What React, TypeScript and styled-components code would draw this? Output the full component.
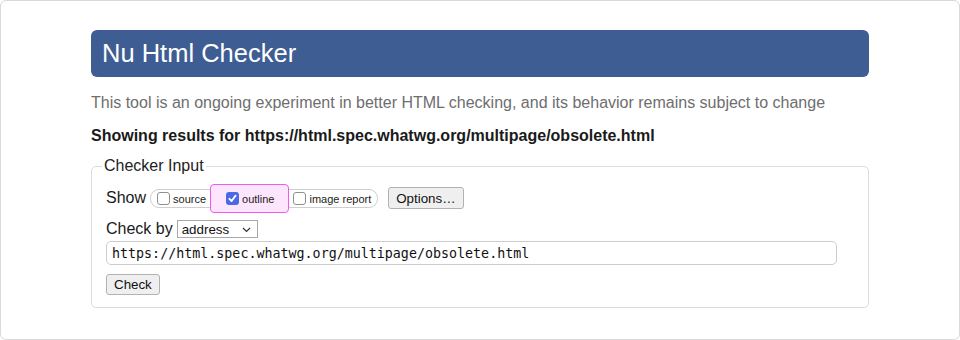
import React from 'react';
import styled, { createGlobalStyle } from 'styled-components';

const GlobalStyle = createGlobalStyle`
  html, body {
    margin: 0;
    padding: 0;
    background: #ffffff;
  }
  body {
    font-family: "Liberation Sans", Arial, sans-serif;
    color: #222;
  }
`;

const Frame = styled.div`
  box-sizing: border-box;
  width: 960px;
  height: 340px;
  border: 1px solid #d9d9d9;
  border-radius: 6px;
  padding: 29px 90px 0 90px;
`;

const Header = styled.h1`
  margin: 0;
  height: 47px;
  display: flex;
  align-items: center;
  padding-left: 11px;
  background: #3e5d92;
  border-radius: 6px;
  color: #ffffff;
  font-size: 25.5px;
  font-weight: 400;
`;

const Intro = styled.p`
  margin: 16px 0 0;
  font-size: 16px;
  line-height: 20px;
  color: #6e6e6e;
`;

const ResultsFor = styled.p`
  margin: 13px 0 0;
  font-size: 16px;
  line-height: 20px;
  font-weight: 700;
  color: #1a1a1a;
`;

const Fieldset = styled.fieldset`
  margin: 10px 0 0;
  padding: 7px 13px 12px 14px;
  border: 1px solid #dcdcdc;
  border-radius: 5px;
  display: flex;
  flex-direction: column;
`;

const Legend = styled.legend`
  margin-left: -4px;
  padding: 0 2px;
  font-size: 16px;
  line-height: 20px;
  color: #222;
`;

const Row = styled.div<{ $height: number; $gap?: number }>`
  display: flex;
  align-items: center;
  height: ${(p) => p.$height}px;
  margin-top: ${(p) => p.$gap ?? 0}px;
`;

const FieldLabel = styled.span`
  font-size: 16px;
  color: #1a1a1a;
  margin-right: 4px;
`;

const Toggles = styled.span`
  display: inline-flex;
  align-items: center;
  box-sizing: border-box;
  height: 19px;
  padding: 0 6px 0 6px;
  border: 1px solid #cfcfcf;
  border-radius: 9px;
  margin-right: 10px;
`;

const Toggle = styled.label<{ $active?: boolean }>`
  display: inline-flex;
  align-items: center;
  box-sizing: border-box;
  font-size: 11px;
  color: #222;
  height: ${(p) => (p.$active ? '29px' : 'auto')};
  margin: ${(p) => (p.$active ? '0 4px' : '0')};
  padding: ${(p) => (p.$active ? '0 14px 0 15px' : '0')};
  border: ${(p) => (p.$active ? '1px solid #ee5cee' : 'none')};
  border-radius: 4px;
  background: ${(p) => (p.$active ? '#fde5fd' : 'transparent')};
`;

const ToggleText = styled.span`
  padding-top: 2px;
`;

const Box = styled.span<{ $checked?: boolean }>`
  box-sizing: border-box;
  width: 13px;
  height: 13px;
  margin-right: 3px;
  border-radius: 3px;
  border: ${(p) => (p.$checked ? 'none' : '1px solid #8f8f8f')};
  background: ${(p) => (p.$checked ? '#4a69e6' : '#ffffff')};
  display: inline-flex;
  align-items: center;
  justify-content: center;
`;

const Button = styled.button<{ $height: number; $pad: number }>`
  box-sizing: border-box;
  height: ${(p) => p.$height}px;
  padding: 0 ${(p) => p.$pad}px;
  font-family: "Liberation Sans", Arial, sans-serif;
  font-size: 13.33px;
  color: #111;
  background: #efefef;
  border: 1px solid #b2b2b2;
  border-radius: 3px;
`;

const SelectWrap = styled.span`
  position: relative;
  display: inline-flex;
  align-items: center;
  box-sizing: border-box;
  width: 81px;
  height: 18px;
  border: 1px solid #a9a9a9;
  background: #ffffff;
`;

const Select = styled.select`
  appearance: none;
  -webkit-appearance: none;
  border: none;
  background: transparent;
  outline: none;
  width: 100%;
  height: 100%;
  padding: 0 0 0 4px;
  margin: 0;
  font-family: "Liberation Sans", Arial, sans-serif;
  font-size: 13.33px;
  color: #111;
`;

const Chevron = styled.svg`
  position: absolute;
  right: 6px;
  top: 6px;
  pointer-events: none;
`;

const UrlInput = styled.input`
  box-sizing: border-box;
  width: 731px;
  height: 24px;
  padding: 0 5px;
  border: 1px solid #cccccc;
  border-radius: 5px;
  font-family: "DejaVu Sans Mono", monospace;
  font-size: 13.33px;
  color: #111;
`;

const Check = () => (
  <svg width="9" height="9" viewBox="0 0 9 9">
    <path d="M1.4 4.8 L3.6 7 L7.6 1.6" fill="none" stroke="#fff" strokeWidth="1.8" strokeLinecap="round" strokeLinejoin="round" />
  </svg>
);

const options = [
  { label: 'source', checked: false },
  { label: 'outline', checked: true },
  { label: 'image report', checked: false },
];

export default function App() {
  return (
    <>
      <GlobalStyle />
      <Frame>
        <Header>Nu Html Checker</Header>
        <Intro>This tool is an ongoing experiment in better HTML checking, and its behavior remains subject to change</Intro>
        <ResultsFor>Showing results for https://html.spec.whatwg.org/multipage/obsolete.html</ResultsFor>
        <Fieldset>
          <Legend>Checker Input</Legend>
          <Row $height={30}>
            <FieldLabel>Show</FieldLabel>
            <Toggles>
              {options.map((o) => (
                <Toggle key={o.label} $active={o.checked}>
                  <Box $checked={o.checked}>{o.checked && <Check />}</Box>
                  <ToggleText>{o.label}</ToggleText>
                </Toggle>
              ))}
            </Toggles>
            <Button $height={22} $pad={7}>Options…</Button>
          </Row>
          <Row $height={20} $gap={6}>
            <FieldLabel>Check by</FieldLabel>
            <SelectWrap>
              <Select defaultValue="address">
                <option value="address">address</option>
                <option value="file">file upload</option>
                <option value="text">text input</option>
              </Select>
              <Chevron width="9" height="6" viewBox="0 0 9 6">
                <path d="M1 1 L4.5 4.5 L8 1" fill="none" stroke="#333" strokeWidth="1.2" />
              </Chevron>
            </SelectWrap>
          </Row>
          <Row $height={24} $gap={2}>
            <UrlInput defaultValue="https://html.spec.whatwg.org/multipage/obsolete.html" />
          </Row>
          <Row $height={21} $gap={9}>
            <Button $height={21} $pad={7}>Check</Button>
          </Row>
        </Fieldset>
      </Frame>
    </>
  );
}
